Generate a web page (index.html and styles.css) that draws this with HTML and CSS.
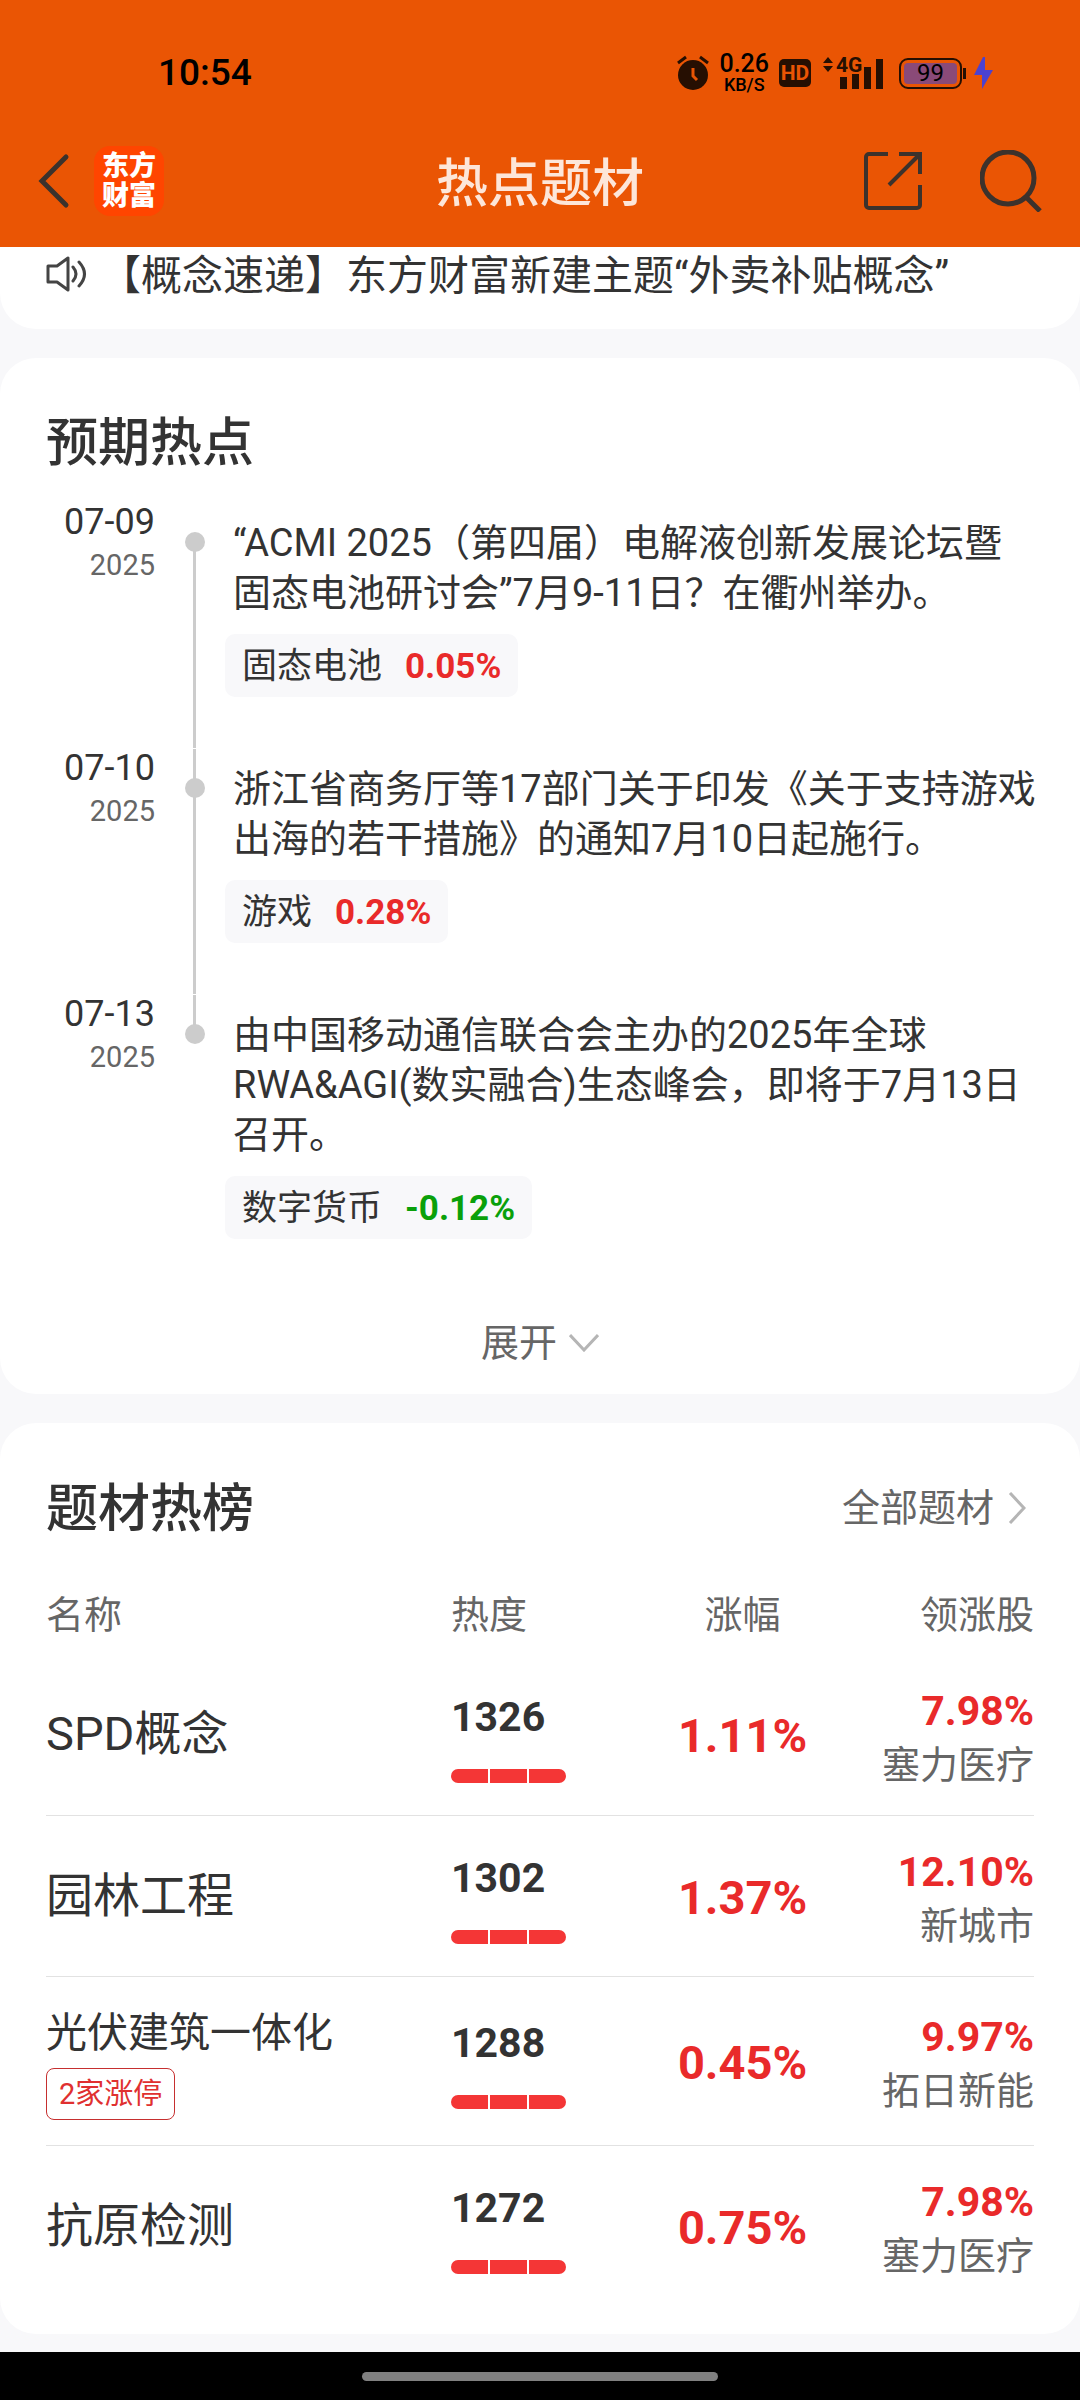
FILE: index.html
```html
<!DOCTYPE html>
<html lang="zh-CN">
<head>
    <meta charset="UTF-8">
    <meta name="viewport" content="width=device-width, initial-scale=1.0">
    <title>热点题材</title>
    <link rel="stylesheet" href="styles.css">
</head>
<body>
    <header class="header">
        <div class="status">
            <span class="time">10:54</span>
            <div class="status-icons">
                <svg class="alarm" width="32" height="36" viewBox="0 0 32 36">
                    <path d="M1 8 9 2M31 8 23 2" stroke="#260f02" stroke-width="3" fill="none"/>
                    <circle cx="16" cy="20" r="15" fill="#260f02"/>
                    <path d="M16 13v8l4 4" stroke="#ea5504" stroke-width="3" fill="none"/>
                </svg>
                <div class="speed">
                    <span class="speed-num">0.26</span>
                    <span class="speed-unit">KB/S</span>
                </div>
                <span class="hd">HD</span>
                <div class="signal">
                    <svg width="60" height="32" viewBox="0 0 60 32" fill="#260f02">
                        <path d="M0 6 5 0l5 6zM0 9h10l-5 6z"/>
                        <path d="M17 20h7v12h-7zM29 17h7v15h-7zM41 10h7v22h-7zM53 2h7v30h-7z"/>
                    </svg>
                    <span class="net">4G</span>
                </div>
                <div class="battery"><span class="level">99</span></div>
                <svg class="bolt" width="19" height="32" viewBox="0 0 19 32">
                    <path d="M9 0 0 18h8v14l11-19h-8V0z" fill="#4c42cf"/>
                </svg>
            </div>
        </div>
        <div class="navbar">
            <div class="nav-side">
                <button class="icon-btn" aria-label="返回">
                    <svg width="32" height="56" viewBox="0 0 32 56">
                        <path d="M28 4 4 28l24 24" fill="none" stroke="#3c322c" stroke-width="5" stroke-linecap="round"/>
                    </svg>
                </button>
                <span class="logo">东方<br>财富</span>
            </div>
            <h1>热点题材</h1>
            <div class="nav-side nav-right">
                <button class="icon-btn" aria-label="分享">
                    <svg width="58" height="58" viewBox="0 0 58 58" fill="none" stroke="#3c322c" stroke-width="4">
                        <path d="M24 2H5a3 3 0 0 0-3 3v48a3 3 0 0 0 3 3h48a3 3 0 0 0 3-3V33"/>
                        <path d="M35 2h21v20M56 2 25 33"/>
                    </svg>
                </button>
                <button class="icon-btn" aria-label="搜索">
                    <svg width="62" height="62" viewBox="0 0 62 62" fill="none" stroke="#3c322c" stroke-width="5">
                        <circle cx="28" cy="28" r="26"/>
                        <path d="m46 47 14 14"/>
                    </svg>
                </button>
            </div>
        </div>
    </header>

    <main class="content">
        <section class="card news">
            <svg width="42" height="36" viewBox="0 0 42 36" fill="none" stroke="#444" stroke-width="3" stroke-linejoin="round">
                <path d="M2 10h9L22 2v32l-11-8H2z"/>
                <path d="M27 11q6 7 0 14M33 6q11 12 0 24" stroke-linecap="round"/>
            </svg>
            <a href="#">【概念速递】东方财富新建主题“外卖补贴概念”</a>
        </section>

        <section class="card expected">
            <h2>预期热点</h2>
            <ul class="timeline">
                <li class="event">
                    <div class="date"><b>07-09</b><span>2025</span></div>
                    <div class="axis"></div>
                    <div class="event-body">
                        <p>“ACMI 2025（第四届）电解液创新发展论坛暨固态电池研讨会”7月9-11日？在衢州举办。</p>
                        <a class="tag" href="#">固态电池<b class="up">0.05%</b></a>
                    </div>
                </li>
                <li class="event">
                    <div class="date"><b>07-10</b><span>2025</span></div>
                    <div class="axis"></div>
                    <div class="event-body">
                        <p>浙江省商务厅等17部门关于印发《关于支持游戏出海的若干措施》的通知7月10日起施行。</p>
                        <a class="tag" href="#">游戏<b class="up">0.28%</b></a>
                    </div>
                </li>
                <li class="event">
                    <div class="date"><b>07-13</b><span>2025</span></div>
                    <div class="axis"></div>
                    <div class="event-body">
                        <p>由中国移动通信联合会主办的2025年全球RWA&amp;AGI(数实融合)生态峰会，即将于7月13日召开。</p>
                        <a class="tag" href="#">数字货币<b class="down">-0.12%</b></a>
                    </div>
                </li>
            </ul>
            <button class="expand">展开
                <svg width="30" height="18" viewBox="0 0 30 18" fill="none" stroke="#b5b5b5" stroke-width="3">
                    <path d="m1 1 14 15L29 1"/>
                </svg>
            </button>
        </section>

        <section class="card ranking">
            <div class="card-head">
                <h2>题材热榜</h2>
                <a class="more" href="#">全部题材
                    <svg width="18" height="32" viewBox="0 0 18 32" fill="none" stroke="#b5b5b5" stroke-width="3">
                        <path d="m2 1 14 15L2 31"/>
                    </svg>
                </a>
            </div>
            <table>
                <thead>
                    <tr><th class="c-name">名称</th><th class="c-heat">热度</th><th class="c-rate">涨幅</th><th class="c-lead">领涨股</th></tr>
                </thead>
                <tbody>
                    <tr>
                        <td class="name">SPD概念</td>
                        <td class="heat">1326<div class="bars"><i></i><i></i><i></i></div></td>
                        <td class="rate">1.11%</td>
                        <td class="lead"><b>7.98%</b>塞力医疗</td>
                    </tr>
                    <tr>
                        <td class="name">园林工程</td>
                        <td class="heat">1302<div class="bars"><i></i><i></i><i></i></div></td>
                        <td class="rate">1.37%</td>
                        <td class="lead"><b>12.10%</b>新城市</td>
                    </tr>
                    <tr class="tall">
                        <td class="name long">光伏建筑一体化<span class="badge">2家涨停</span></td>
                        <td class="heat">1288<div class="bars"><i></i><i></i><i></i></div></td>
                        <td class="rate">0.45%</td>
                        <td class="lead"><b>9.97%</b>拓日新能</td>
                    </tr>
                    <tr>
                        <td class="name">抗原检测</td>
                        <td class="heat">1272<div class="bars"><i></i><i></i><i></i></div></td>
                        <td class="rate">0.75%</td>
                        <td class="lead"><b>7.98%</b>塞力医疗</td>
                    </tr>
                </tbody>
            </table>
        </section>
    </main>

    <footer class="gesture"><span></span></footer>
</body>
</html>
```
FILE: styles.css
```css
* {
    box-sizing: border-box;
}
body {
    margin: 0;
    min-height: 100vh;
    display: flex;
    flex-direction: column;
    background: #f8f8fa;
    color: #333;
    font-family: Roboto, "Noto Sans CJK SC", sans-serif;
    font-size: 38px;
    line-height: 50px;
}
h1, h2, p, ul {
    margin: 0;
    padding: 0;
}
h1, h2 {
    font-size: 52px;
    line-height: 60px;
    font-weight: 500;
}
a {
    color: inherit;
    text-decoration: none;
}
button {
    border: none;
    background: none;
    padding: 0;
    color: inherit;
    font: inherit;
    cursor: pointer;
}
svg {
    display: block;
    flex: none;
}

/* header */
.header {
    background: #ea5504;
    padding: 48px 38px 31px;
}
.status {
    display: flex;
    justify-content: space-between;
    align-items: center;
    height: 50px;
    padding: 0 49px 0 120px;
    color: #000;
}
.time {
    font-size: 37px;
    font-weight: 500;
}
.status-icons {
    display: flex;
    align-items: center;
}
.speed {
    display: flex;
    flex-direction: column;
    align-items: center;
    margin: 0 10px;
    font-weight: 500;
}
.speed-num {
    font-size: 25px;
    line-height: 24px;
}
.speed-unit {
    font-size: 18px;
    line-height: 18px;
}
.hd {
    width: 32px;
    height: 28px;
    border-radius: 5px;
    background: #260f02;
    color: #ea5504;
    font-size: 21px;
    font-weight: 700;
    line-height: 29px;
    text-align: center;
}
.signal {
    position: relative;
    margin: 0 16px 0 12px;
}
.net {
    position: absolute;
    left: 13px;
    top: -2px;
    font-size: 21px;
    font-weight: 700;
    line-height: 20px;
    color: #260f02;
}
.battery {
    position: relative;
    width: 63px;
    height: 31px;
    padding: 3px;
    border: 2px solid #260f02;
    border-radius: 9px;
}
.battery::after {
    content: "";
    position: absolute;
    right: -6px;
    top: 8px;
    width: 3px;
    height: 11px;
    background: #260f02;
}
.level {
    display: block;
    border-radius: 4px;
    background: #8a4a78;
    font-size: 24px;
    line-height: 21px;
    text-align: center;
}
.bolt {
    margin-left: 12px;
}
.navbar {
    display: flex;
    justify-content: space-between;
    align-items: center;
    height: 70px;
    margin-top: 48px;
}
.nav-side {
    flex: 1;
    display: flex;
    align-items: center;
    gap: 24px;
}
.nav-right {
    justify-content: flex-end;
    gap: 58px;
}
.navbar h1 {
    padding-top: 8px;
    color: #fde6d9;
}
.logo {
    width: 70px;
    height: 70px;
    padding: 5px 0;
    border-radius: 16px;
    background: #ff4500;
    color: #fff;
    font-size: 27px;
    font-weight: 900;
    line-height: 30px;
    text-align: center;
}

/* cards */
.content {
    display: flex;
    flex-direction: column;
    gap: 29px;
}
.card {
    background: #fff;
    border-radius: 36px;
    padding: 0 46px;
}
.news {
    display: flex;
    align-items: center;
    gap: 12px;
    border-radius: 0 0 36px 36px;
    padding-bottom: 29px;
    font-size: 41px;
    line-height: 48px;
}
.news a {
    padding-top: 5px;
    white-space: nowrap;
}

/* timeline */
.expected {
    padding-top: 56px;
    padding-bottom: 26px;
}
.timeline {
    list-style: none;
    margin-top: 28px;
}
.event {
    display: flex;
    min-height: 246px;
}
.date {
    width: 109px;
    display: flex;
    flex-direction: column;
    text-align: right;
}
.date b {
    font-size: 36px;
    font-weight: 400;
    line-height: 40px;
}
.date span {
    color: #666;
    font-size: 29px;
    line-height: 46px;
}
.axis {
    position: relative;
    width: 20px;
    margin: 0 20px 0 30px;
    background: linear-gradient(#ccc, #ccc) 8px 1px / 3px 100% no-repeat;
}
.axis::before {
    content: "";
    position: absolute;
    left: 0;
    top: 30px;
    width: 20px;
    height: 20px;
    border-radius: 50%;
    background: #ccc;
}
.event:first-child .axis {
    background-position: 8px 40px;
}
.event:last-child .axis {
    background-size: 3px 40px;
}
.event-body {
    flex: 1;
    margin-right: -3px;
    padding-top: 16px;
}
.event-body p {
    padding-left: 8px;
}
.tag {
    display: inline-flex;
    gap: 23px;
    margin-top: 16px;
    padding: 2px 17px 0;
    border-radius: 10px;
    background: #f8f8fa;
    font-size: 35px;
    line-height: 61px;
}
.up {
    color: #e92a2a;
}
.down {
    color: #0aa00a;
}
.expand {
    display: flex;
    align-items: center;
    gap: 12px;
    margin: 78px auto 0;
    color: #666;
}

/* ranking */
.ranking {
    padding-top: 57px;
    padding-bottom: 28px;
}
.card-head {
    display: flex;
    justify-content: space-between;
    align-items: center;
}
.more {
    display: flex;
    align-items: center;
    gap: 14px;
    padding: 0 8px 4px 0;
    color: #666;
}
table {
    width: 100%;
    margin-top: 50px;
    table-layout: fixed;
    border-collapse: collapse;
}
th {
    height: 64px;
    padding: 0;
    color: #666;
    font-weight: 400;
    text-align: left;
    vertical-align: top;
}
.c-name {
    width: 41%;
}
.c-heat {
    width: 20%;
}
.c-rate {
    width: 19%;
    text-align: center;
}
.c-lead {
    width: 20%;
    text-align: right;
}
td {
    height: 161px;
    padding: 0;
}
.tall td {
    height: 169px;
}
tbody tr + tr td {
    border-top: 1px solid #e2e2e2;
}
.name {
    font-size: 47px;
}
.name.long {
    padding-top: 6px;
    font-size: 41px;
}
.badge {
    display: block;
    width: max-content;
    margin-top: 10px;
    padding: 0 12px;
    border: 1px solid #c62f2f;
    border-radius: 8px;
    color: #e03030;
    font-size: 29px;
    line-height: 50px;
}
.heat {
    padding-top: 6px;
    font-size: 41px;
    font-weight: 700;
}
.bars {
    display: flex;
    gap: 2px;
    width: 115px;
    height: 14px;
    margin-top: 27px;
    border-radius: 7px;
    overflow: hidden;
}
.bars i {
    flex: 1;
    background: #f43636;
}
.rate {
    padding-top: 4px;
    color: #e92a2a;
    font-size: 47px;
    font-weight: 700;
    text-align: center;
}
.lead {
    padding-top: 7px;
    color: #666;
    line-height: 54px;
    text-align: right;
}
.lead b {
    display: block;
    color: #e92a2a;
    font-size: 41px;
}

/* system gesture bar */
.gesture {
    display: flex;
    justify-content: center;
    align-items: center;
    height: 48px;
    margin-top: auto;
    background: #000;
}
.gesture span {
    width: 33%;
    height: 9px;
    border-radius: 5px;
    background: #808080;
}
```
